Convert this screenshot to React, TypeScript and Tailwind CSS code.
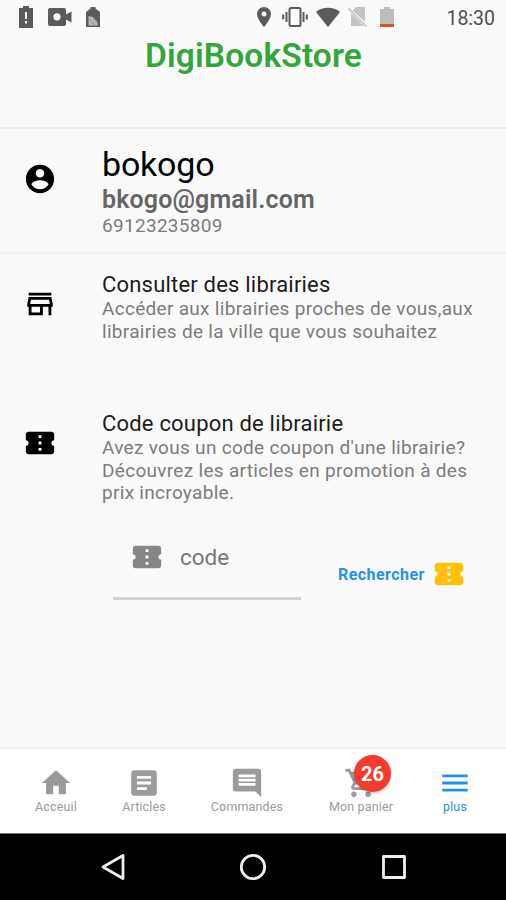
import React from "react";

const icons = {
  account:
    "M12 2C6.48 2 2 6.48 2 12s4.48 10 10 10 10-4.48 10-10S17.52 2 12 2zm0 3c1.66 0 3 1.34 3 3s-1.34 3-3 3-3-1.34-3-3 1.34-3 3-3zm0 14.2c-2.5 0-4.71-1.28-6-3.22.03-1.99 4-3.08 6-3.08 1.99 0 5.97 1.09 6 3.08-1.29 1.94-3.5 3.22-6 3.22z",
  store:
    "M18.36 9l.6 3H5.04l.6-3h12.72M20 4H4v2h16V4zm0 3H4l-1 5v2h1v6h10v-6h4v6h2v-6h1v-2l-1-5zM6 18v-4h6v4H6z",
  ticket:
    "M22 10V6c0-1.11-.9-2-2-2H4c-1.1 0-1.99.89-1.99 2v4c1.1 0 1.99.9 1.99 2s-.89 2-2 2v4c0 1.1.9 2 2 2h16c1.1 0 2-.9 2-2v-4c-1.1 0-2-.9-2-2s.9-2 2-2zm-9 7.5h-2v-2h2v2zm0-4.5h-2v-2h2v2zm0-4.5h-2v-2h2v2z",
  home: "M10 20v-6h4v6h5v-8h3L12 3 2 12h3v8z",
  article:
    "M19 3H5c-1.1 0-2 .9-2 2v14c0 1.1.9 2 2 2h14c1.1 0 2-.9 2-2V5c0-1.1-.9-2-2-2zm-5 14H7v-2h7v2zm3-4H7v-2h10v2zm0-4H7V7h10v2z",
  message:
    "M21.99 4c0-1.1-.89-2-1.99-2H4c-1.1 0-2 .9-2 2v12c0 1.1.9 2 2 2h14l4 4-.01-18zM18 14H6v-2h12v2zm0-3H6V9h12v2zm0-3H6V6h12v2z",
  cart: "M7 18c-1.1 0-1.99.9-1.99 2S5.9 22 7 22s2-.9 2-2-.9-2-2-2zM1 2v2h2l3.6 7.59-1.35 2.45c-.16.28-.25.61-.25.96 0 1.1.9 2 2 2h12v-2H7.42c-.14 0-.25-.11-.25-.25l.03-.12.9-1.63h7.45c.75 0 1.41-.41 1.75-1.03l3.58-6.49c.08-.14.12-.31.12-.48 0-.55-.45-1-1-1H5.21l-.94-2H1zm16 16c-1.1 0-1.99.9-1.99 2s.89 2 1.99 2 2-.9 2-2-.9-2-2-2z",
  menu: "M3 18h18v-2H3v2zm0-5h18v-2H3v2zm0-7v2h18V6H3z",
};

function Icon({ name, className }: { name: keyof typeof icons; className: string }) {
  return (
    <svg viewBox="0 0 24 24" fill="currentColor" className={`shrink-0 ${className}`}>
      <path d={icons[name]} />
    </svg>
  );
}

function StatusBar() {
  return (
    <div className="flex h-[35px] shrink-0 items-center justify-between pl-[18px] pr-[11px] text-[#5b5b5b]">
      <div className="flex items-center">
        <svg viewBox="0 0 16 24" className="-mt-px h-6 w-4" fill="currentColor">
          <path d="M1 3h4V1h6v2h4v20H1zM7 7v7h2V7zm0 9v2.5h2V16z" fillRule="evenodd" />
        </svg>
        <svg viewBox="0 0 24 20" className="-mt-px ml-[14px] h-5 w-6" fill="currentColor">
          <path
            d="M2 1h14q2 0 2 2v4.5l5.500-3v11L18 12.500V17q0 2-2 2H2q-2 0-2-2V3q0-2 2-2zM9 6.200a3.600 3.600 0 1 0 0 7.200 3.600 3.600 0 0 0 0-7.200z"
            fillRule="evenodd"
          />
        </svg>
        <svg viewBox="0 0 16 22" className="-mt-px ml-[13px] h-[22px] w-4" fill="currentColor">
          <path d="M1 6l4.500-3.500V1h5v1.500L15 6v15H1z" />
          <path d="M3.500 10l4.500 1 4.500 5v3.500h-9z" fill="#b9b9b9" />
          <path d="M4 13l6 6M8 12l4 5" stroke="#888" strokeWidth=".8" />
        </svg>
      </div>
      <div className="flex items-center">
        <svg viewBox="0 0 14 20" className="-mt-px h-5 w-[14px]" fill="currentColor">
          <path
            d="M7 0a7 7 0 0 0-7 7c0 5 7 13 7 13s7-8 7-13a7 7 0 0 0-7-7zm0 4.500a2.500 2.500 0 1 1 0 5 2.500 2.500 0 0 1 0-5z"
            fillRule="evenodd"
          />
        </svg>
        <svg viewBox="0 0 26 20" className="-mt-px ml-[11px] h-5 w-[26px]" fill="none" stroke="currentColor" strokeWidth="2">
          <rect x="7.500" y="1" width="11" height="18" rx="1.500" />
          <path d="M4.500 5v10M21.500 5v10" />
          <path d="M1.200 7.500v5M24.800 7.500v5" />
        </svg>
        <svg viewBox="0 0 24 20" className="-mt-px ml-[8px] h-5 w-6" fill="currentColor">
          <path d="M12 20L0 5Q5 .8 12 .8T24 5z" />
        </svg>
        <svg viewBox="0 0 20 20" className="-mt-px ml-[8px] h-5 w-5" fill="#c4c4c4">
          <path d="M8 0h9v15L4.500 3.500z" />
          <path d="M3 6L16 19H3z" />
          <path d="M.5 1.500L18.500 19.500" stroke="#c4c4c4" strokeWidth="1.600" />
        </svg>
        <svg viewBox="0 0 14 20" className="-mt-px ml-[12px] h-5 w-[14px]">
          <path d="M0 2h4V0h6v2h4v15H0z" fill="#bdbdbd" />
          <path d="M0 17h14v3H0z" fill="#d4572b" />
        </svg>
        <span className="ml-[52px] mt-[2px] text-[19.5px] leading-6 text-[#505050]">18:30</span>
      </div>
    </div>
  );
}

function Row({ icon, children }: { icon: "store" | "ticket"; children: React.ReactNode }) {
  return (
    <div className="flex pl-[23px]">
      <Icon name={icon} className="mt-[15px] size-[34px] text-black" />
      <div className="ml-[45px] whitespace-nowrap">{children}</div>
    </div>
  );
}

const tabs = [
  { icon: "home", label: "Acceuil", width: "w-[88px]" },
  { icon: "article", label: "Articles", width: "w-[88px]" },
  { icon: "message", label: "Commandes", width: "w-[118px]" },
  { icon: "cart", label: "Mon panier", width: "w-[110px]", badge: 26 },
  { icon: "menu", label: "plus", width: "w-[78px]", active: true },
] as const;

export default function App() {
  return (
    <div className="flex h-[900px] w-[506px] flex-col overflow-hidden bg-[#fafafa] font-['Roboto',sans-serif]">
      <StatusBar />
      <header className="h-[94px] shrink-0 border-b-2 border-[#efefef] pl-px text-center">
        <h1 className="text-[33.5px] font-semibold leading-[41px] tracking-[0.15px] text-[#33a63a]">DigiBookStore</h1>
      </header>

      <main className="flex-1">
        <section className="h-[126px] border-b-3 border-[#f3f3f3] pt-[15px]">
          <div className="flex pl-[23px]">
            <Icon name="account" className="mt-[18px] size-[34px] text-black" />
            <div className="ml-[45px] whitespace-nowrap">
              <p className="text-[34px] leading-[41px] tracking-[-0.2px] text-black">bokogo</p>
              <p className="text-[25px] font-semibold leading-[29px] tracking-[0.15px] text-[#666]">bkogo@gmail.com</p>
              <p className="text-[19px] leading-[24px] tracking-[0.3px] text-[#7c7c7c]">69123235809</p>
            </div>
          </div>
        </section>

        <section className="h-[139px] pt-[17px]">
          <Row icon="store">
            <h2 className="text-[22px] leading-[26px] tracking-[0.2px] text-[#1c1c1c]">Consulter des librairies</h2>
            <p className="text-[19px] leading-[22.5px] tracking-[0.3px] text-[#7c7c7c]">
              Accéder aux librairies proches de vous,aux
              <br />
              librairies de la ville que vous souhaitez
            </p>
          </Row>
        </section>

        <section className="pt-[17px]">
          <Row icon="ticket">
            <h2 className="text-[22px] leading-[26px] tracking-[0.2px] text-[#1c1c1c]">Code coupon de librairie</h2>
            <p className="text-[19px] leading-[22.5px] tracking-[0.3px] text-[#7c7c7c]">
              Avez vous un code coupon d'une librairie?
              <br />
              Découvrez les articles en promotion à des
              <br />
              prix incroyable.
            </p>
          </Row>
        </section>

        <div className="mt-[25px] flex pl-[113px]">
          <div className="flex h-[70px] w-[188px] border-b-3 border-[#d2d2d2] pl-[17px] pt-[10px]">
            <Icon name="ticket" className="size-[34px] text-[#868686]" />
            <span className="ml-4 mt-1 text-[22.5px] leading-[26px] text-[#777]">code</span>
          </div>
          <div className="ml-[37px] mt-[27px] flex h-[34px] items-center">
            <span className="mt-[2px] w-[94px] whitespace-nowrap text-[16px] font-bold tracking-[0.45px] text-[#2490ee]">
              Rechercher
            </span>
            <Icon name="ticket" className="size-[34px] text-[#ffc107]" />
          </div>
        </div>
      </main>

      <nav className="flex h-[87px] shrink-0 border-b border-t-2 border-b-[#777] border-t-[#f3f3f3] bg-white pl-3">
        {tabs.map((tab) => (
          <div
            key={tab.label}
            className={`flex flex-col items-center pt-[17px] ${tab.width} ${
              "active" in tab ? "text-[#2490ee]" : "text-[#9b9b9b]"
            }`}
          >
            <div className="relative">
              <Icon name={tab.icon} className="size-[34px]" />
              {"badge" in tab && (
                <span className="absolute -top-[11px] left-[10px] flex size-[37px] items-center justify-center rounded-full bg-[#f43b30] text-[20px] font-bold text-white shadow-[0_1px_3px_rgba(0,0,0,0.3)]">
                  {tab.badge}
                </span>
              )}
            </div>
            <span className="whitespace-nowrap text-[12.5px] leading-[14px] tracking-[0.15px]">{tab.label}</span>
          </div>
        ))}
      </nav>

      <footer className="flex h-[66px] shrink-0 items-center bg-black pl-[99px]">
        <svg viewBox="0 0 28 28" className="size-7" fill="none" stroke="#eee" strokeWidth="2.8" strokeLinejoin="round">
          <path d="M24 2.500v23L4 14z" />
        </svg>
        <svg viewBox="0 0 28 28" className="ml-[112px] size-7" fill="none" stroke="#eee" strokeWidth="2.8">
          <circle cx="14" cy="14" r="11.700" />
        </svg>
        <svg viewBox="0 0 28 28" className="ml-[113px] size-7" fill="none" stroke="#eee" strokeWidth="2.8" strokeLinejoin="round">
          <rect x="3.500" y="3.500" width="21" height="21" />
        </svg>
      </footer>
    </div>
  );
}
